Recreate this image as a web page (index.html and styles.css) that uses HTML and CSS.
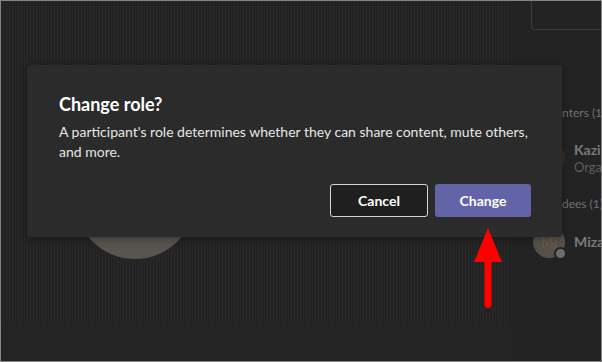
FILE: index.html
```html
<!DOCTYPE html>
<html lang="en">
<head>
  <meta charset="UTF-8">
  <meta name="viewport" content="width=device-width, initial-scale=1.0">
  <title>Change role</title>
  <link rel="stylesheet" href="styles.css">
</head>
<body>
  <div class="window">

    <div class="stage">
      <div class="tile">
        <div class="avatar-big"></div>
      </div>
      <div class="stage-bar"></div>
    </div>

    <aside class="side">
      <div class="self-view"></div>
      <div class="section">Presenters (1)</div>
      <div class="person first">
        <div class="avatar org"></div>
        <div class="names">
          <div class="name">Kazim</div>
          <div class="role">Organizer</div>
        </div>
      </div>
      <div class="section second">Attendees (1)</div>
      <div class="person">
        <div class="avatar">MI<span class="dot"></span></div>
        <div class="names">
          <div class="name">Mizan</div>
        </div>
      </div>
    </aside>

    <div class="dialog">
      <h2 class="title">Change role?</h2>
      <p class="text">A participant's role determines whether they can share content, mute others, and more.</p>
      <div class="actions">
        <button class="btn cancel">Cancel</button>
        <button class="btn primary">Change</button>
      </div>
    </div>

    <svg class="arrow" width="32" height="84" viewBox="0 0 32 84">
      <polygon points="16,1 2,35 30,35" fill="#ff0000"/>
      <line x1="16" y1="33" x2="16" y2="77.5" stroke="#ff0000" stroke-width="7" stroke-linecap="round"/>
    </svg>

  </div>
</body>
</html>
```

FILE: styles.css
```css
    body{
      margin: 0px;
      padding: 0px;
      background-color: #232323;
      font-family: Lato, "Open Sans", sans-serif;
    }
    .window{
      position: relative;
      box-sizing: border-box;
      width: 602px;
      height: 362px;
      border: 1px solid #858585;
      display: grid;
      grid-template-columns: 509px 1fr;
      overflow: hidden;
      background-color: #232323;
    }
    .stage{
      display: flex;
      flex-direction: column;
      background: repeating-linear-gradient(90deg, #232323 0px, #232323 2px, #282828 2px, #282828 3px);
    }
    .tile{
      flex: 1;
      padding: 138px 0px 0px 74px;
    }
    .avatar-big{
      width: 120px;
      height: 120px;
      border-radius: 50%;
      background-color: #58544e;
    }
    .stage-bar{
      height: 35px;
      background-color: #242424;
    }
    .side{
      display: flex;
      flex-direction: column;
      padding-left: 21px;
      overflow: hidden;
      white-space: nowrap;
      background-color: #232323;
    }
    .self-view{
      height: 28px;
      border-left: 1px solid #3e3e3e;
      border-bottom: 1px solid #3e3e3e;
      border-bottom-left-radius: 4px;
    }
    .section{
      margin-top: 75px;
      padding-left: 2px;
      font-size: 12px;
      line-height: 16px;
      color: #707070;
    }
    .section.second{
      margin-top: 21px;
    }
    .person{
      display: flex;
      align-items: center;
      gap: 9px;
      margin-top: 14px;
      padding-left: 2px;
    }
    .person.first{
      margin-top: 20px;
    }
    .avatar{
      position: relative;
      flex: none;
      width: 32px;
      height: 32px;
      border-radius: 50%;
      background-color: #55504a;
      color: #6e5a44;
      font-size: 13px;
      font-weight: bold;
      line-height: 32px;
      text-align: center;
    }
    .avatar.org{
      background-color: #3a2d2d;
    }
    .dot{
      position: absolute;
      right: -2px;
      bottom: -2px;
      width: 9px;
      height: 9px;
      border-radius: 50%;
      background-color: #6c6c6c;
      border: 2px solid #232323;
    }
    .name{
      font-size: 14px;
      line-height: 18px;
      color: #7a7a7a;
      font-weight: bold;
    }
    .role{
      font-size: 13px;
      line-height: 16px;
      color: #5e5e5e;
    }
    .dialog{
      position: absolute;
      left: 26px;
      top: 64px;
      width: 535px;
      box-sizing: border-box;
      padding: 27px 31px 20px 32px;
      background-color: #2b2b2b;
      border-radius: 3px;
      box-shadow: 0px 2px 8px rgba(0, 0, 0, 0.35);
    }
    .title{
      margin: 0px;
      font-size: 18px;
      line-height: 24px;
      font-weight: bold;
      color: #ffffff;
    }
    .text{
      margin: 6px 0px 0px 0px;
      font-size: 14px;
      line-height: 20px;
      color: #e6e6e6;
    }
    .actions{
      display: flex;
      justify-content: flex-end;
      gap: 7px;
      margin-top: 22px;
    }
    .btn{
      height: 33px;
      border-radius: 3px;
      font-family: inherit;
      font-size: 14px;
      font-weight: bold;
      color: #ffffff;
      cursor: pointer;
    }
    .cancel{
      width: 98px;
      background-color: #1f1f1f;
      border: 1px solid #d6d6d6;
    }
    .primary{
      width: 96px;
      background-color: #6264a7;
      border: none;
    }
    .arrow{
      position: absolute;
      left: 471px;
      top: 226px;
    }
```
